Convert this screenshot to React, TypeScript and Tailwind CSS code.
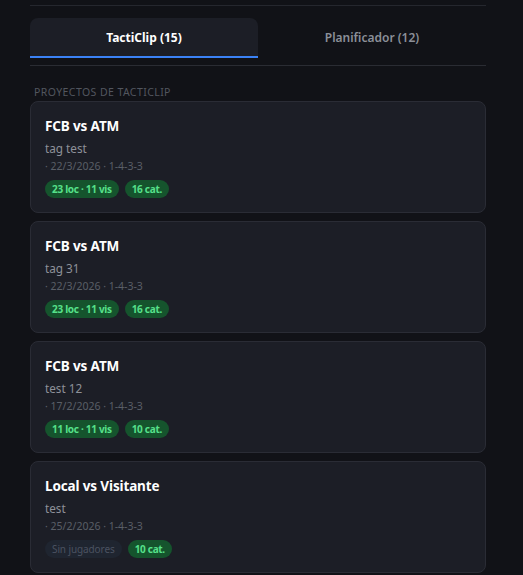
import React from "react";

type Project = {
  title: string;
  tag: string;
  date: string;
  formation: string;
  players: string | null;
  categories: string;
};

const projects: Project[] = [
  { title: "FCB vs ATM", tag: "tag test", date: "22/3/2026", formation: "1-4-3-3", players: "23 loc · 11 vis", categories: "16 cat." },
  { title: "FCB vs ATM", tag: "tag 31", date: "22/3/2026", formation: "1-4-3-3", players: "23 loc · 11 vis", categories: "16 cat." },
  { title: "FCB vs ATM", tag: "test 12", date: "17/2/2026", formation: "1-4-3-3", players: "11 loc · 11 vis", categories: "10 cat." },
  { title: "Local vs Visitante", tag: "test", date: "25/2/2026", formation: "1-4-3-3", players: null, categories: "10 cat." },
];

function ProjectCard({ project }: { project: Project }) {
  return (
    <div className="rounded-lg border border-[#2a2c35] bg-[#1c1e26] p-[14px]">
      <h3 className="text-[13.5px] font-bold leading-5 tracking-[-0.01em] text-white">{project.title}</h3>
      <p className="mt-[2px] text-[11.75px] leading-5 text-[#8e9199]">{project.tag}</p>
      <p className="text-[10.5px] leading-4 text-[#5a5e67]">
        · {project.date} · {project.formation}
      </p>
      <div className="mt-1.5 flex items-center gap-[6px]">
        {project.players ? (
          <span className="rounded-full bg-[#15542d] px-[7px] text-[10px] font-bold leading-[18px] tracking-[-0.03em] text-[#56e08a]">
            {project.players}
          </span>
        ) : (
          <span className="rounded-full bg-[#1f2530] px-[7px] text-[10px] leading-[18px] tracking-[-0.01em] text-[#4b5260]">
            Sin jugadores
          </span>
        )}
        <span className="rounded-full bg-[#15542d] px-[7px] text-[10px] font-bold leading-[18px] tracking-[-0.03em] text-[#56e08a]">
          {project.categories}
        </span>
      </div>
    </div>
  );
}

export default function App() {
  return (
    <div
      className="min-h-screen bg-[#111217] pl-[30px] pr-[37px]"
      style={{ fontFamily: '"Noto Sans", "Open Sans", sans-serif' }}
    >
      <div className="h-[6px] border-b border-[#25272e]" />
      <div className="mt-3 flex border-b border-[#2a2c33] pb-[7px]">
        <button
          type="button"
          className="h-[40px] flex-1 rounded-t-lg border-b-2 border-[#3b82f6] bg-[#1c1e26] pt-[2px] text-[12px] font-bold text-white"
        >
          TactiClip (15)
        </button>
        <button
          type="button"
          className="h-[40px] flex-1 border-b-2 border-transparent pt-[2px] text-[12px] font-semibold text-[#8b8f98]"
        >
          Planificador (12)
        </button>
      </div>
      <p className="mt-[18px] px-1 text-[10.5px] uppercase leading-4 tracking-[0.04em] text-[#52565f]">
        Proyectos de TactiClip
      </p>
      <div className="mt-[1px] flex flex-col gap-2 pb-4">
        {projects.map((project, index) => (
          <ProjectCard key={index} project={project} />
        ))}
      </div>
    </div>
  );
}
